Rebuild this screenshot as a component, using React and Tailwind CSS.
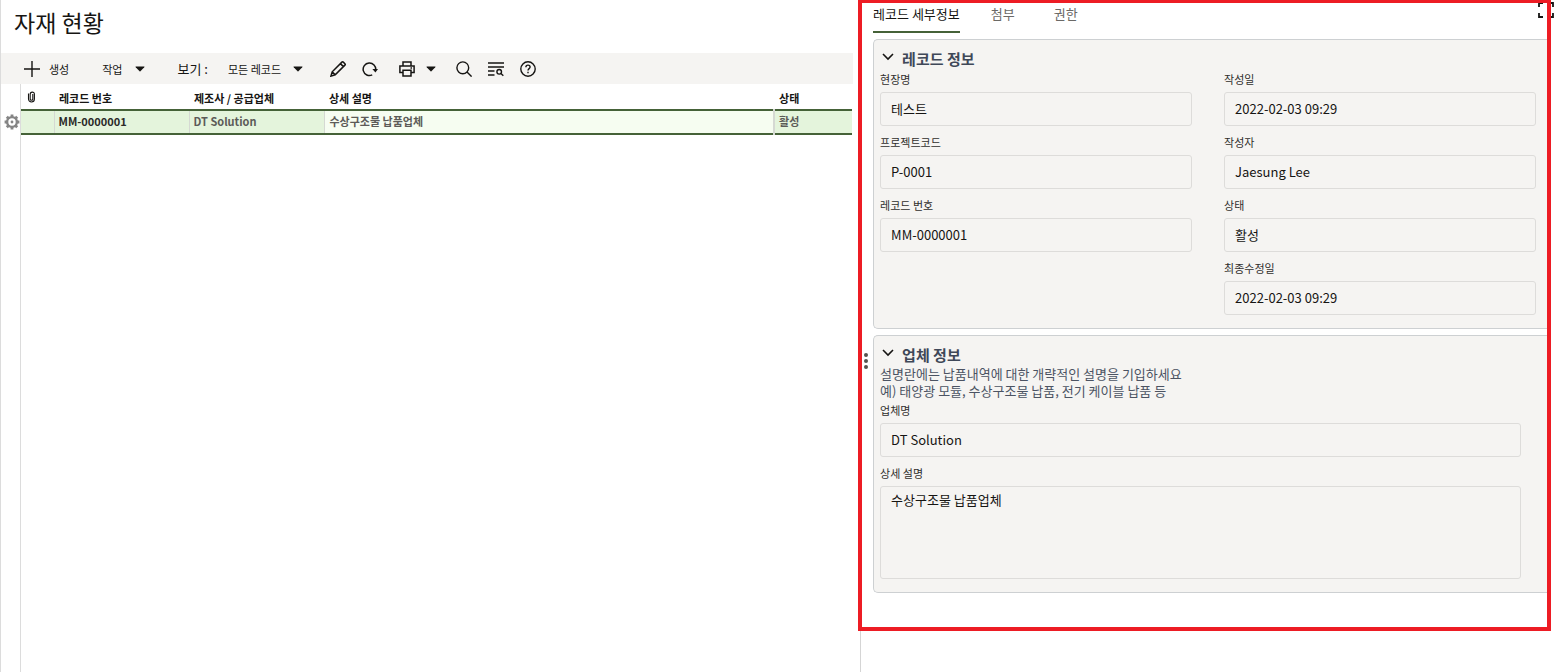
import React, { useState } from "react";

const tabs = ["레코드 세부정보", "첨부", "권한"];

const leftFields = [
  { id: "site", label: "현장명", value: "테스트" },
  { id: "project", label: "프로젝트코드", value: "P-0001" },
  { id: "record", label: "레코드 번호", value: "MM-0000001" },
];

const rightFields = [
  { id: "created", label: "작성일", value: "2022-02-03 09:29" },
  { id: "author", label: "작성자", value: "Jaesung Lee" },
  { id: "status", label: "상태", value: "활성" },
  { id: "updated", label: "최종수정일", value: "2022-02-03 09:29" },
];

const records = [
  { no: "MM-0000001", vendor: "DT Solution", detail: "수상구조물 납품업체", status: "활성" },
];

function Icon({ children, className = "size-4" }) {
  return (
    <svg viewBox="0 0 16 16" fill="none" stroke="#161513" strokeWidth="1.4" className={`shrink-0 ${className}`} aria-hidden="true">
      {children}
    </svg>
  );
}

function Caret({ className = "" }) {
  return (
    <svg viewBox="0 0 10 6" className={`h-[6px] w-[10px] shrink-0 ${className}`} aria-hidden="true">
      <path d="M1 .5h8c.5 0 .6.4.3.8L5.4 5.2a.6.6 0 0 1-.8 0L.7 1.3C.4.9.5.5 1 .5z" fill="#161513" />
    </svg>
  );
}

function GearIcon() {
  return (
    <svg viewBox="0 0 16 16" className="size-4" stroke="#858585" fill="none" aria-hidden="true">
      <circle cx="8" cy="8" r="4.9" strokeWidth="2.4" />
      <path
        d="M8 .6v3M8 12.4v3M.6 8h3M12.4 8h3M2.8 2.8l2 2M11.2 11.2l2 2M13.2 2.8l-2 2M4.8 11.2l-2 2"
        strokeWidth="2.8"
      />
      <circle cx="8" cy="8" r="1.4" fill="#858585" stroke="none" />
    </svg>
  );
}

function Toolbar() {
  return (
    <div className="mr-[7px] flex h-[31px] items-center bg-[#f5f4f2] pl-[23px] text-[11px] text-[#161513]">
      <button className="flex items-center gap-[9px] pt-px">
        <Icon>
          <path d="M8 0v16M0 8h16" />
        </Icon>
        생성
      </button>
      <button className="ml-[33px] flex items-center gap-3 pt-px">
        작업
        <Caret />
      </button>
      <label htmlFor="view" className="ml-[33px] text-[13px]">
        보기 :
      </label>
      <div className="relative ml-5 flex items-center pt-px">
        <select id="view" className="w-[75px] appearance-none bg-transparent">
          <option>모든 레코드</option>
        </select>
        <Caret className="pointer-events-none absolute right-0" />
      </div>
      <button className="ml-[27px]" aria-label="편집">
        <Icon>
          <path d="M.9 15.1l1.3-4.3L11.900 1.100c.4-.4 1-.4 1.400 0l1.600 1.600c.4.4.4 1 0 1.400L5.200 13.800z M10.400 2.600l3 3 M2.200 10.800l3 3" strokeWidth="1.5" />
        </Icon>
      </button>
      <button className="ml-4" aria-label="새로 고침">
        <Icon>
          <path d="M10.2 13.9A6.3 6.3 0 1 1 13.7 9" strokeWidth="1.5" />
          <path d="M10.4 8H16l-2.6 3.6z" fill="#161513" stroke="none" />
        </Icon>
      </button>
      <button className="ml-[21px] flex items-center gap-[11px]" aria-label="인쇄">
        <Icon>
          <path d="M4 5V1h8v4M4 11.5H.9V5h14.2v6.5H12M4 9.2h8V15H4z" strokeWidth="1.5" />
          <path d="M11.5 7H13" />
        </Icon>
        <Caret />
      </button>
      <button className="ml-5" aria-label="검색">
        <Icon>
          <circle cx="6.8" cy="6.8" r="5.9" />
          <path d="M11 11l4.6 4.6" />
        </Icon>
      </button>
      <button className="ml-4" aria-label="목록에서 찾기">
        <Icon>
          <path d="M0 2h16M0 6h16M0 10h6.5M0 14h6.5" />
          <circle cx="11.2" cy="10.8" r="2.3" />
          <path d="M13 12.5l2.3 2.3" />
        </Icon>
      </button>
      <button className="ml-4" aria-label="도움말">
        <Icon>
          <circle cx="8" cy="8" r="7.2" />
          <path d="M5.9 6.2c0-1.3.9-2.1 2.1-2.1s2.1.8 2.1 1.9c0 1.6-2.1 1.7-2.1 3.5" />
          <path d="M8 10.8v1.5" />
        </Icon>
      </button>
    </div>
  );
}

function RecordTable() {
  return (
    <div className="flex flex-1">
      <div className="w-[19px] shrink-0 pt-[30px] pl-[3px]">
        <button className="block" aria-label="행 설정">
          <GearIcon />
        </button>
      </div>
      <div className="min-w-0 flex-1 border-l border-[#dcdcdc] pr-2">
        <table className="w-full table-fixed border-collapse text-left text-[11px] font-bold">
          <colgroup>
            <col className="w-[33px]" />
            <col className="w-[135px]" />
            <col className="w-[135px]" />
            <col />
            <col className="w-[78px]" />
          </colgroup>
          <thead className="text-[#161513]">
            <tr className="h-[26px]">
              <th aria-label="첨부" className="pl-[6px]">
                <svg viewBox="0 0 9 12" className="h-3 w-[9px]" fill="none" stroke="#161513" strokeWidth="1.1" aria-hidden="true">
                  <path d="M5.800 3v5a1.300 1.300 0 0 1-2.600 0V3.200a2 2 0 0 1 4.200 0V8a2.900 2.900 0 0 1-5.900 0V2.500" />
                </svg>
              </th>
              <th className="pt-[3px] pl-[5px]">레코드 번호</th>
              <th className="pt-[3px] pl-[5px]">제조사 / 공급업체</th>
              <th className="pt-[3px] pl-[5px]">상세 설명</th>
              <th className="pt-[3px] pl-[5px]">상태</th>
            </tr>
          </thead>
          <tbody>
            {records.map((row) => (
              <tr key={row.no} className="h-6 border-y-2 border-[#456238] bg-[#e4f4dc] leading-5 text-[#5c5b58]">
                <td />
                <td className="border-l border-l-[#d5d9d3] pb-[2px] pl-1 text-[#2b2a28]">{row.no}</td>
                <td className="border-l border-l-[#d5d9d3] pb-[2px] pl-1">{row.vendor}</td>
                <td className="border-l border-l-[#d5d9d3] bg-[#f6fdf1] pb-[2px] pl-[5px]">{row.detail}</td>
                <td className="border-l-2 border-l-[#d5d9d3] pb-[2px] pl-1">{row.status}</td>
              </tr>
            ))}
          </tbody>
        </table>
      </div>
    </div>
  );
}

function Field({ id, label, value, multiline = false }) {
  const box = "block w-full resize-none rounded-[3px] border border-[#dddcda] bg-transparent px-[10px] text-[13px] text-[#161513] outline-none";
  return (
    <div>
      <label htmlFor={id} className="mb-[3px] block text-[11px] leading-5 text-[#2f2e2c]">
        {label}
      </label>
      {multiline ? (
        <textarea id={id} readOnly defaultValue={value} className={`${box} h-[93px] py-[3px] leading-5`} />
      ) : (
        <input id={id} readOnly defaultValue={value} className={`${box} h-[34px] pb-[2px]`} />
      )}
    </div>
  );
}

function Section({ title, className = "", children }) {
  const [open, setOpen] = useState(true);
  return (
    <section className={`rounded-l-[5px] border border-r-0 border-[#cdd0d2] bg-[#f5f4f2] pt-[9px] pb-[13px] pl-[6px] ${className}`}>
      <h2 className="text-[15px] leading-5 font-bold text-[#3f4858]">
        <button className="flex gap-2 pl-[2px]" aria-expanded={open} onClick={() => setOpen(!open)}>
          <svg viewBox="0 0 12 12" className="size-3" fill="none" stroke="#161513" strokeWidth="1.6" aria-hidden="true">
            <path d="M1 5l5 5 5-5" />
          </svg>
          {title}
        </button>
      </h2>
      {open && children}
    </section>
  );
}

function DetailPanel() {
  const [active, setActive] = useState(tabs[0]);
  return (
    <div className="relative pr-[14px] pb-[38px] pl-3">
      <div className="flex justify-between">
        <div role="tablist" className="flex h-[33px] gap-[31px] text-[13px]">
          {tabs.map((tab) => (
            <button
              key={tab}
              role="tab"
              aria-selected={tab === active}
              onClick={() => setActive(tab)}
              className={`min-w-8 border-b-2 pb-1 text-left leading-[26px] ${
                tab === active ? "border-[#456238] text-[#161513]" : "border-transparent text-[#6b6966]"
              }`}
            >
              {tab}
            </button>
          ))}
        </div>
        <button className="-mr-[6px] self-start pt-[2px]" aria-label="전체 화면">
          <Icon>
            <path d="M1 5V1h4M11 1h4v4M15 11v4h-4M5 15H1v-4" strokeWidth="1.8" />
          </Icon>
        </button>
      </div>

      <div className="mt-[6px] flex flex-col gap-[6px]">
        <Section title="레코드 정보" className="pr-3">
          <div className="grid grid-cols-2 gap-8">
            <div className="flex flex-col gap-[6px]">
              {leftFields.map((field) => (
                <Field key={field.id} {...field} />
              ))}
            </div>
            <div className="flex flex-col gap-[6px]">
              {rightFields.map((field) => (
                <Field key={field.id} {...field} />
              ))}
            </div>
          </div>
        </Section>

        <Section title="업체 정보" className="pr-[27px]">
          <p className="mb-px text-[13px] leading-[17px] text-[#4b5362]">
            설명란에는 납품내역에 대한 개략적인 설명을 기입하세요
            <br />
            예) 태양광 모듈, 수상구조물 납품, 전기 케이블 납품 등
          </p>
          <div className="flex flex-col gap-[6px]">
            <Field id="company" label="업체명" value="DT Solution" />
            <Field id="detail" label="상세 설명" value="수상구조물 납품업체" multiline />
          </div>
        </Section>
      </div>

      {/* splitter handle */}
      <div className="absolute top-[353px] left-[3px] flex flex-col gap-[2px]">
        <span className="size-1 rounded-full bg-[#55534f]" />
        <span className="size-1 rounded-full bg-[#55534f]" />
        <span className="size-1 rounded-full bg-[#55534f]" />
      </div>

      {/* highlight frame */}
      <div className="pointer-events-none absolute inset-y-0 right-[11px] -left-[3px] border-4 border-t-[3px] border-[#ed1c24]" />
    </div>
  );
}

export default function App() {
  return (
    <div className="flex min-h-screen bg-white font-['Noto_Sans_CJK_KR',sans-serif]">
      <main className="flex w-[calc(55%+1px)] flex-col border-l border-[#dcdcdc]">
        <h1 className="h-[53px] pl-[13px] text-[23px] leading-[44px] text-[#161513]">자재 현황</h1>
        <Toolbar />
        <RecordTable />
      </main>
      <aside className="min-w-0 flex-1 border-l border-[#d5d5d5]">
        <DetailPanel />
      </aside>
    </div>
  );
}
